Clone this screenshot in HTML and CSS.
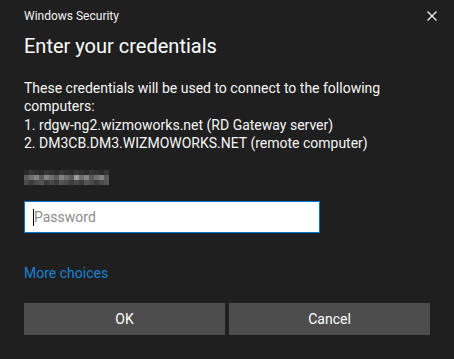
FILE: index.html
```html
<!DOCTYPE html>
<html lang="en">
<head>
  <meta charset="UTF-8">
  <title>Windows Security</title>
  <link rel="stylesheet" href="styles.css">
</head>
<body>
  <div class="dialog">
    <div class="titlebar">
      <span class="app-name">Windows Security</span>
      <button class="close" type="button" aria-label="Close">
        <svg width="10" height="10" viewBox="0 0 10 10"><path d="M0.5 0.5L9.5 9.5M9.5 0.5L0.5 9.5" stroke="#ffffff" stroke-width="1.1"/></svg>
      </button>
    </div>

    <h1>Enter your credentials</h1>

    <p class="message">
      These credentials will be used to connect to the following computers:<br>
      1. rdgw-ng2.wizmoworks.net (RD Gateway server)<br>
      2. DM3CB.DM3.WIZMOWORKS.NET (remote computer)
    </p>

    <!-- username is pixelated in the screenshot -->
    <div class="user-blur">
      <span class="b1"></span><span class="b2"></span><span class="b3"></span><span class="b1"></span><span class="b2"></span><span class="b3"></span><span class="b1"></span><span class="b2"></span><span class="b3"></span><span class="b1"></span><span class="b2"></span><span class="b3"></span><span class="b1"></span><span class="b2"></span><span class="b3"></span><span class="b1"></span><span class="b2"></span>
      <span class="m2"></span><span class="m1"></span><span class="m3"></span><span class="m2"></span><span class="m3"></span><span class="m1"></span><span class="m2"></span><span class="m3"></span><span class="m1"></span><span class="m2"></span><span class="m4"></span><span class="m1"></span><span class="m3"></span><span class="m2"></span><span class="m1"></span><span class="m3"></span><span class="m2"></span>
      <span class="t1"></span><span class="t2"></span><span class="t1"></span><span class="t3"></span><span class="t2"></span><span class="t1"></span><span class="t2"></span><span class="t3"></span><span class="t1"></span><span class="t2"></span><span class="t1"></span><span class="t2"></span><span class="t3"></span><span class="t1"></span><span class="t2"></span><span class="t1"></span><span class="t3"></span>
    </div>

    <div class="field">
      <span class="caret"></span>
      <input type="password" placeholder="Password">
    </div>

    <a class="more" href="#">More choices</a>

    <div class="actions">
      <button type="button" class="btn">OK</button>
      <button type="button" class="btn">Cancel</button>
    </div>
  </div>
</body>
</html>
```

FILE: styles.css
```css
* {
  margin: 0;
  padding: 0;
  box-sizing: border-box;
}

body {
  font-family: Roboto, 'Noto Sans', sans-serif;
  background: #1f1f1f;
  color: #ffffff;
  width: 454px;
  height: 359px;
  overflow: hidden;
}

.dialog {
  padding: 0 24px;
}

.titlebar {
  display: flex;
  justify-content: space-between;
  align-items: center;
  height: 32px;
}

.app-name {
  font-size: 12px;
  color: #f2f2f2;
}

.close {
  background: none;
  border: none;
  width: 10px;
  height: 10px;
  margin-right: -7px;
  display: flex;
}

h1 {
  font-size: 20px;
  font-weight: 400;
  line-height: 28px;
}

.message {
  margin-top: 19px;
  font-size: 14px;
  line-height: 18.4px;
  color: #f6f6f6;
}

.user-blur {
  margin-top: 17px;
  display: grid;
  grid-template-columns: repeat(17, 5px);
  grid-auto-rows: 5px;
  width: 85px;
  height: 15px;
}

.b1 { background: #2a2a2a; }
.b2 { background: #363636; }
.b3 { background: #303030; }
.m1 { background: #6e6e6e; }
.m2 { background: #5a5a5a; }
.m3 { background: #828282; }
.m4 { background: #9a9a9a; }
.t1 { background: #4a4a4a; }
.t2 { background: #3c3c3c; }
.t3 { background: #555555; }

.field {
  position: relative;
  margin-top: 16px;
  width: 296px;
  height: 32px;
}

.field input {
  width: 100%;
  height: 100%;
  border: 1px solid #0078d7;
  background: #ffffff;
  padding: 0 9px;
  font-family: inherit;
  font-size: 14px;
  outline: none;
}

.field input::placeholder {
  color: #8c8c8c;
}

.caret {
  position: absolute;
  left: 9px;
  top: 8px;
  width: 1px;
  height: 17px;
  background: #000000;
}

.more {
  display: block;
  margin-top: 31px;
  font-size: 14px;
  line-height: 18px;
  color: #1a82d6;
  text-decoration: none;
}

.actions {
  display: flex;
  gap: 4px;
  margin-top: 21px;
}

.btn {
  flex: 1;
  height: 32px;
  border: none;
  background: #4d4d4d;
  color: #ffffff;
  font-family: inherit;
  font-size: 14px;
}
```
